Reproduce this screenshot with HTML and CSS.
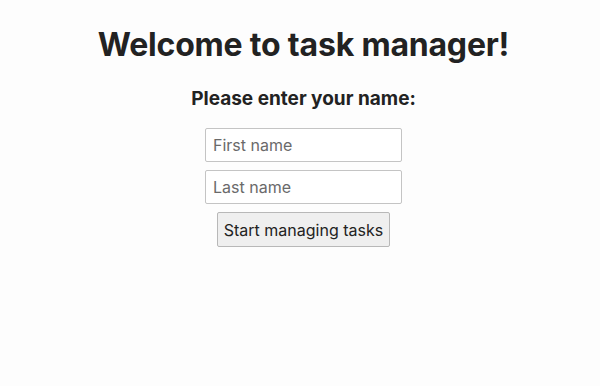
FILE: index.html
```html
<!DOCTYPE html>
<html>
    <head>
        <title>Task Manager</title>
        <link rel="stylesheet" href="styles.css">
    </head>
    <body>
        <main class="welcome">
            <h1 class="title">Welcome to task manager!</h1>
            <p class="subtitle">Please enter your name:</p>
            <form class="name-form">
                <input type="text" class="name-input" placeholder="First name">
                <input type="text" class="name-input" placeholder="Last name">
                <button type="button" class="start-button">Start managing tasks</button>
            </form>
        </main>
    </body>
</html>
```

FILE: styles.css
```css
body {
    margin: 0;
    background-color: #fdfdfd;
    color: #222;
    font-family: Inter, "Noto Sans", sans-serif;
}

.welcome {
    display: flex;
    flex-direction: column;
    align-items: center;
    padding: 25px 0 0 7px;
}

.title {
    margin: 0;
    font-size: 32px;
    font-weight: 700;
    letter-spacing: -0.2px;
}

.subtitle {
    margin: 23px 0 0 0;
    font-size: 19px;
    font-weight: 700;
}

.name-form {
    display: flex;
    flex-direction: column;
    align-items: center;
    gap: 8px;
    margin-top: 18px;
}

.name-input {
    box-sizing: border-box;
    width: 197px;
    height: 34px;
    padding: 0 7px;
    border: 1px solid #c4c4c4;
    border-radius: 2px;
    background-color: white;
    font-family: inherit;
    font-size: 16px;
    color: #222;
}

.name-input::placeholder {
    color: #6a6a6a;
}

.start-button {
    box-sizing: border-box;
    height: 35px;
    padding: 0 6px;
    border: 1px solid #b8b8b8;
    border-radius: 2px;
    background-color: #efefef;
    font-family: inherit;
    font-size: 16px;
    color: #222;
}
```
